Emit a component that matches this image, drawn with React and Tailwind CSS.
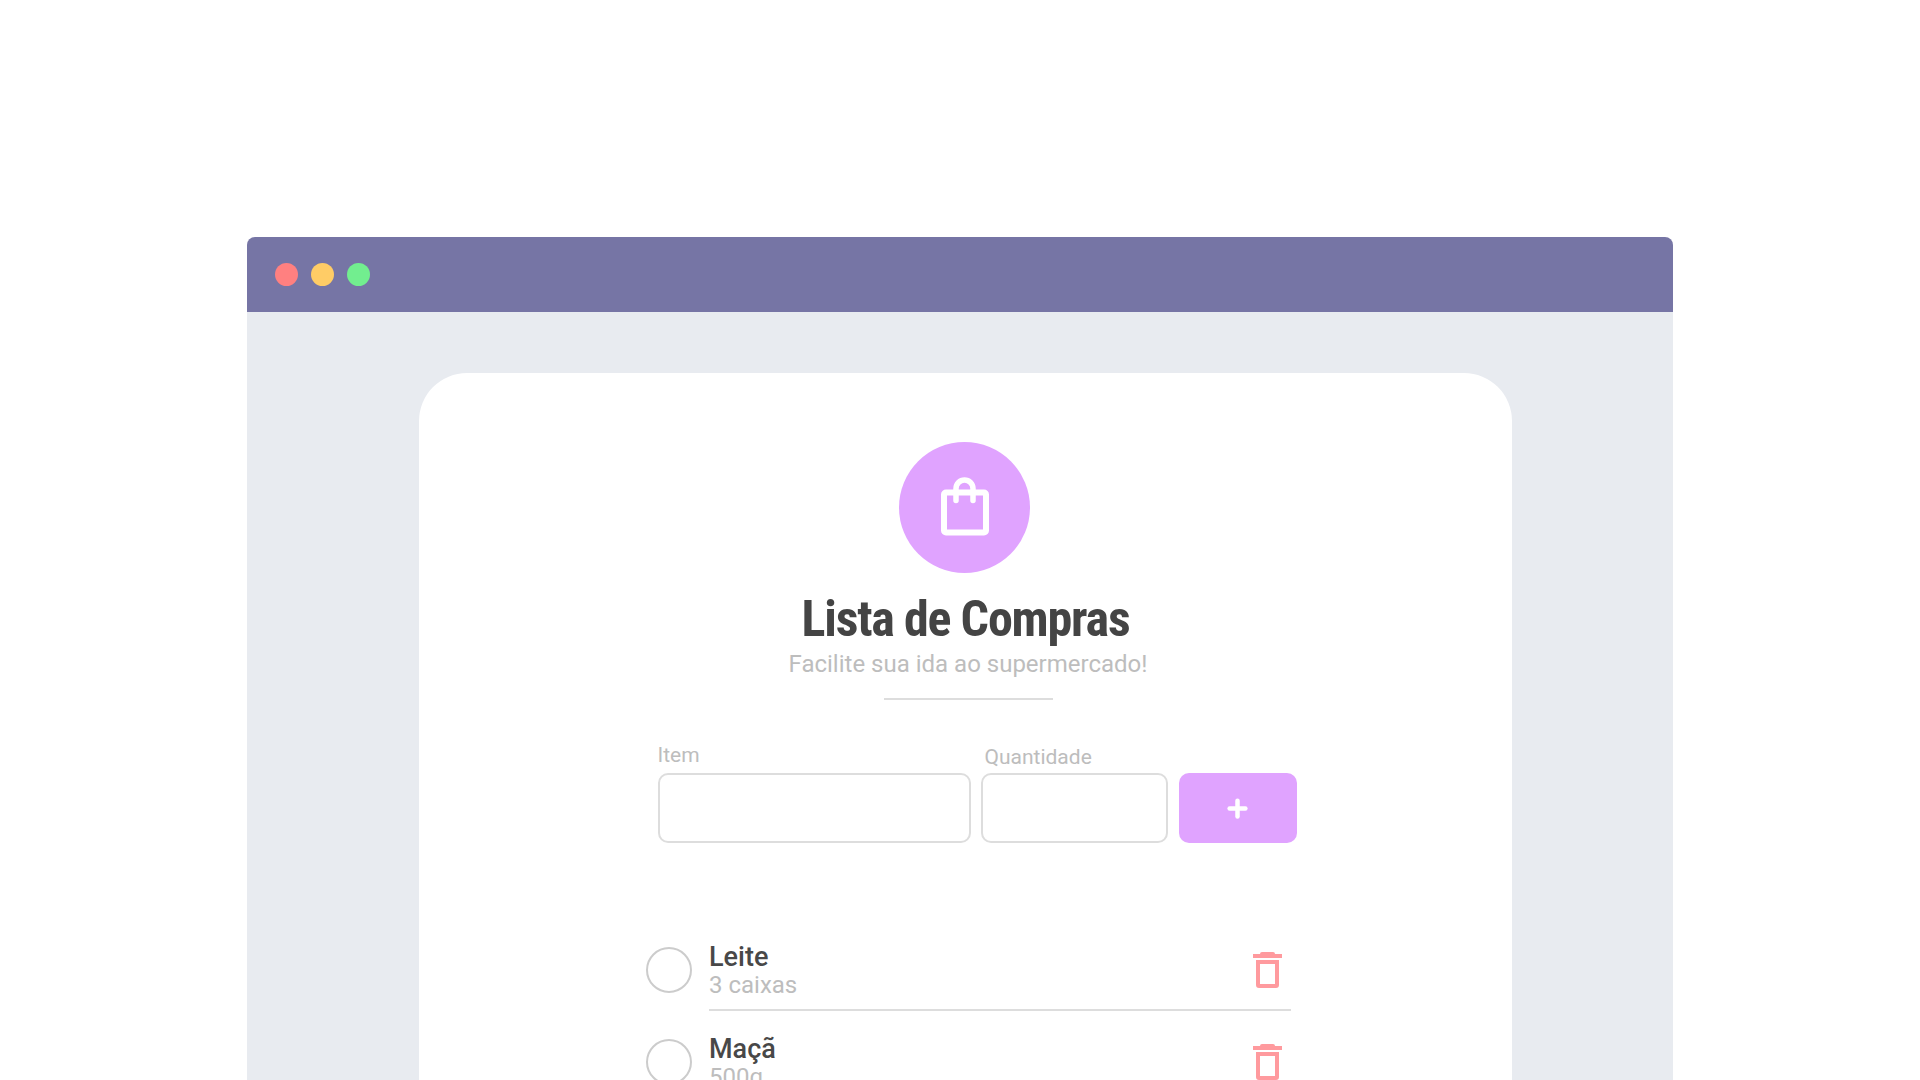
import { Plus } from "lucide-react";

const items = [
  { name: "Leite", amount: "3 caixas" },
  { name: "Maçã", amount: "500g" },
  { name: "Pão", amount: "2 unidades" },
];

function BagIcon() {
  return (
    <svg width="48" height="59" viewBox="0 0 48 59" fill="none" stroke="white" strokeWidth="6" strokeLinecap="round" strokeLinejoin="round">
      <rect x="3" y="15.5" width="42" height="40" rx="2" />
      <path d="M15 23.5V11.5a8.5 8.5 0 0 1 17 0V23.5" strokeWidth="5.5" />
    </svg>
  );
}

function TrashIcon() {
  return (
    <svg className="mb-[7px]" width="29" height="36" viewBox="0 0 29 36" fill="#ff9a9e">
      <path d="M9 0h11a2 2 0 0 1 2 2H7a2 2 0 0 1 2-2Z" />
      <rect x="0" y="2" width="29" height="4" />
      <path fillRule="evenodd" d="M3 8h23v25a3 3 0 0 1-3 3H6a3 3 0 0 1-3-3V8Zm4 4v20h15V12H7Z" />
    </svg>
  );
}

function Item({ name, amount }) {
  return (
    <li className="flex items-center">
      <div className="w-[46px] h-[46px] rounded-full border-2 border-[#cccccc] shrink-0 mb-[8px]" />
      <div className="ml-[17px] flex-1 flex items-center justify-between border-b-2 border-[#dddddd] h-[74px] pr-[9px]">
        <div className="pb-[5px]">
          <p className="text-[27px] leading-[29px] font-medium text-[#484848]">{name}</p>
          <p className="text-[24px] leading-[27px] text-[#bdbdbd]">{amount}</p>
        </div>
        <TrashIcon />
      </div>
    </li>
  );
}

export default function App() {
  return (
    <div className="h-screen overflow-hidden bg-white pt-[237px] font-['Roboto',sans-serif]">
      <div className="ml-[247px] w-[1426px] h-[900px] flex flex-col">
        <header className="h-[75px] bg-[#7675a5] rounded-t-lg flex items-center pl-[28px] gap-[13px] shrink-0">
          <span className="w-[23px] h-[23px] rounded-full bg-[#ff8080]" />
          <span className="w-[23px] h-[23px] rounded-full bg-[#ffcc66]" />
          <span className="w-[23px] h-[23px] rounded-full bg-[#72ee8f]" />
        </header>

        <div className="flex-1 bg-[#e8ebf0] pl-[172px] pr-[161px] pt-[61px]">
          <main className="h-[900px] bg-white rounded-[48px] flex flex-col items-center pt-[69px]">
            <div className="w-[131px] h-[131px] mr-[2px] rounded-full bg-[#e0a3ff] flex items-center justify-center pb-[3px]">
              <BagIcon />
            </div>

            <h1 className="mt-[17px] text-[50px] leading-[58px] font-bold text-[#444444] tracking-[-0.024em] [font-stretch:75%]">
              Lista de Compras
            </h1>
            <p className="mt-[1px] ml-[5px] text-[24px] leading-[30px] text-[#bdbdbd]">
              Facilite sua ida ao supermercado!
            </p>
            <div className="mt-[19px] ml-[5px] w-[169px] h-[2px] bg-[#dddddd]" />

            <form className="mt-[43px] ml-[23px] flex items-end w-[639px]">
              <label className="w-[313px] block">
                <span className="block text-[21px] leading-[24px] text-[#bdbdbd] mb-[6px]">Item</span>
                <input className="w-full h-[70px] rounded-[10px] border-2 border-[#dddddd] bg-white" />
              </label>
              <label className="ml-[10px] w-[187px] block">
                <span className="block pl-[4px] text-[21px] leading-[24px] text-[#bdbdbd] mb-[4px]">Quantidade</span>
                <input className="w-full h-[70px] rounded-[10px] border-2 border-[#dddddd] bg-white" />
              </label>
              <button type="button" className="ml-[11px] w-[118px] h-[70px] rounded-[10px] bg-[#e0a3ff] flex items-center justify-center">
                <Plus size={27} strokeWidth={4} color="white" />
              </button>
            </form>

            <ul className="mt-[94px] ml-[6px] w-[645px] flex flex-col gap-[18px]">
              {items.map((item) => (
                <Item key={item.name} {...item} />
              ))}
            </ul>
          </main>
        </div>
      </div>
    </div>
  );
}
